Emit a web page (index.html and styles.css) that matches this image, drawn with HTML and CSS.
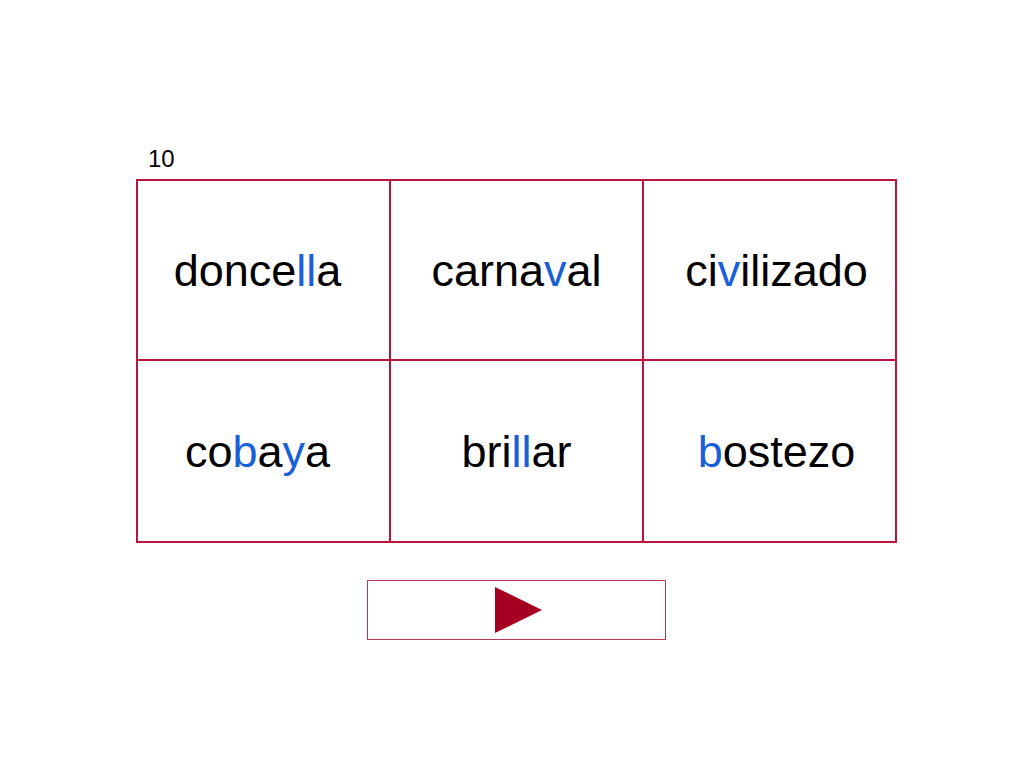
FILE: index.html
```html
<!DOCTYPE html>
<html lang="es">
<head>
<meta charset="utf-8">
<title>10</title>
<link rel="stylesheet" href="styles.css">
</head>
<body>
<div class="page">
  <div class="label">10</div>
  <div class="grid">
    <div class="cell c1">donce<span class="hl">ll</span>a</div>
    <div class="cell c2">carna<span class="hl">v</span>al</div>
    <div class="cell c3">ci<span class="hl">v</span>ilizado</div>
    <div class="cell c1">co<span class="hl">b</span>a<span class="hl">y</span>a</div>
    <div class="cell c2">bri<span class="hl">ll</span>ar</div>
    <div class="cell c3"><span class="hl">b</span>ostezo</div>
  </div>
  <div class="btn-row">
    <div class="play-btn">
      <svg class="play" width="47" height="46" viewBox="0 0 47 46"><polygon points="0,0 47,23 0,46" fill="#a50021"/></svg>
    </div>
  </div>
</div>
</body>
</html>
```

FILE: styles.css
```css
html, body {
  margin: 0;
  padding: 0;
  background: #ffffff;
}
.page {
  width: 761px;
  padding: 145px 0 0 136px;
  font-family: "Liberation Sans", Arial, sans-serif;
  color: #000;
}
.label {
  font-size: 24px;
  line-height: 28px;
  padding-left: 12px;
  height: 34px;
}
.grid {
  display: grid;
  grid-template-columns: repeat(3, 253px);
  grid-template-rows: 180px 182px;
  border-left: 2px solid #b8163f;
  border-top: 2px solid #b8163f;
}
.cell {
  border-right: 2px solid #b8163f;
  border-bottom: 2px solid #b8163f;
  display: flex;
  align-items: center;
  justify-content: center;
  font-size: 45px;
  padding-top: 2px;
  box-sizing: border-box;
}
.c1 { padding-right: 12px; }
.c3 { padding-left: 14px; }
.hl { color: #1a5fd6; }
.btn-row {
  display: flex;
  justify-content: center;
  margin-top: 37px;
}
.play-btn {
  width: 293px;
  height: 58px;
  border: 1px solid #b33a55;
  display: flex;
  align-items: center;
  justify-content: center;
  padding-left: 4px;
  box-sizing: content-box;
}
.play { display: block; }
```
